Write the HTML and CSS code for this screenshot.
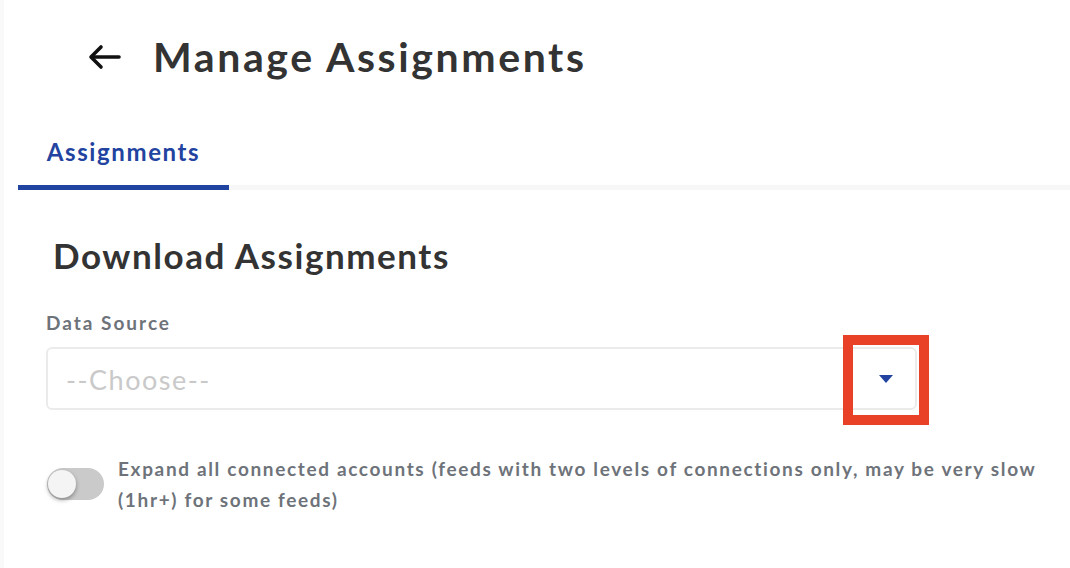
FILE: index.html
```html
<!DOCTYPE html>
<html lang="en">
<head>
<meta charset="utf-8">
<title>Manage Assignments</title>
<link rel="stylesheet" href="styles.css">
</head>
<body>
<div class="page">
  <header class="header">
    <button class="back" aria-label="Back">
      <svg width="34" height="26" viewBox="0 0 34 26" fill="none" stroke="#111" stroke-width="3.6" stroke-linecap="round" stroke-linejoin="round">
        <path d="M31 13H4"/>
        <path d="M13 3L3 13l10 10"/>
      </svg>
    </button>
    <h1 class="title">Manage Assignments</h1>
  </header>

  <nav class="tabs">
    <div class="tab active">Assignments</div>
    <div class="tab-rest"></div>
  </nav>

  <section class="section">
    <h2 class="section-title">Download Assignments</h2>
    <label class="field-label">Data Source</label>
    <div class="select-wrap">
      <div class="select">
        <span class="placeholder">--Choose--</span>
        <span class="caret-box">
          <svg class="caret" width="14" height="8" viewBox="0 0 14 8"><path d="M0 0h14L7 8z" fill="#2244a0"/></svg>
        </span>
      </div>
      <div class="highlight"></div>
    </div>

    <div class="toggle-row">
      <div class="toggle"><span class="knob"></span></div>
      <p class="toggle-text">Expand all connected accounts (feeds with two levels of connections only, may be very slow (1hr+) for some feeds)</p>
    </div>
  </section>
</div>
</body>
</html>
```

FILE: styles.css
```css
* { box-sizing: border-box; }
html, body { margin: 0; padding: 0; background: #fff; }
body {
  font-family: Lato, "Noto Sans", sans-serif;
  width: 1070px;
  height: 568px;
  overflow: hidden;
}
.page {
  height: 568px;
  border-left: 4px solid #f9f9f9;
}
.header {
  display: flex;
  align-items: center;
  height: 114px;
  padding-left: 84px;
}
.back {
  border: 0;
  background: none;
  padding: 0;
  margin: 0 31px 0 0;
  display: flex;
  cursor: pointer;
}
.title {
  margin: 0;
  font-size: 41px;
  line-height: 50px;
  font-weight: 700;
  color: #333;
  letter-spacing: 2.6px;
}
.tabs {
  display: flex;
  margin-left: 14px;
  margin-top: 2px;
}
.tab {
  width: 211px;
  height: 74px;
  padding-top: 22px;
  text-align: center;
  font-size: 24px;
  line-height: 28px;
  font-weight: 700;
  color: #2244a0;
  letter-spacing: 1.6px;
  border-bottom: 5px solid #2044a0;
}
.tab-rest {
  flex: 1;
  border-bottom: 5px solid #f7f7f7;
}
.section {
  padding-left: 42px;
}
.section-title {
  margin: 43px 0 0 7px;
  font-size: 35px;
  font-weight: 700;
  color: #333;
  line-height: 44px;
  letter-spacing: 1.55px;
}
.field-label {
  display: block;
  margin-top: 34px;
  font-size: 19px;
  font-weight: 700;
  color: #6e737a;
  line-height: 24px;
  letter-spacing: 2px;
}
.select-wrap {
  position: relative;
  width: 871px;
  margin-top: 12px;
}
.select {
  display: flex;
  align-items: center;
  justify-content: space-between;
  height: 63px;
  border: 2px solid #ebebeb;
  border-radius: 6px;
  padding-left: 18px;
}
.placeholder {
  font-size: 27px;
  color: #c9c9c9;
  letter-spacing: 1.5px;
  padding-top: 2px;
}
.caret-box {
  width: 58px;
  display: flex;
  justify-content: center;
}
.caret { display: block; }
.highlight {
  position: absolute;
  left: 797px;
  top: -12px;
  width: 86px;
  height: 90px;
  border: 10px solid #e94128;
  pointer-events: none;
}
.toggle-row {
  display: flex;
  align-items: flex-start;
  margin-top: 43px;
}
.toggle {
  position: relative;
  flex: none;
  width: 57px;
  height: 32px;
  border-radius: 16px;
  background: #cacaca;
  margin: 15px 14px 0 1px;
}
.knob {
  position: absolute;
  left: 1px;
  top: 2px;
  width: 28px;
  height: 28px;
  border-radius: 50%;
  background: #f4f4f4;
  box-shadow: 0 2px 4px rgba(0,0,0,0.35);
}
.toggle-text {
  margin: 0;
  font-size: 19px;
  font-weight: 700;
  line-height: 31px;
  color: #6e737a;
  letter-spacing: 1.65px;
  max-width: 940px;
}
```
